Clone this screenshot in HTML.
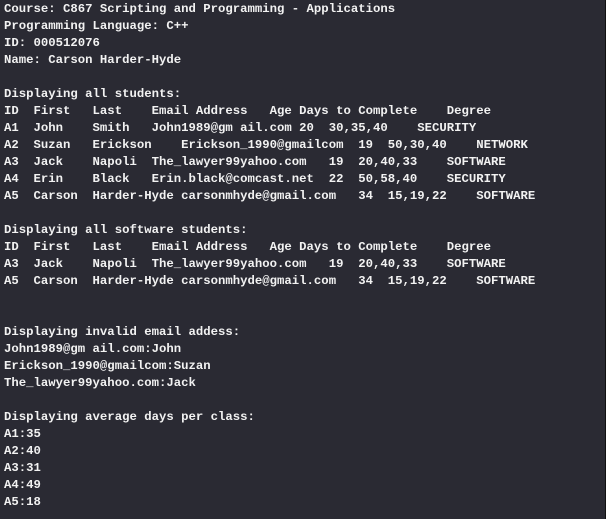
<!DOCTYPE html>
<html><head><meta charset="utf-8"><style>
html,body{margin:0;padding:0;}
body{width:606px;height:519px;background:#2a2a33;overflow:hidden;position:relative;}
body:after{content:"";position:absolute;right:0;top:0;width:1px;height:519px;background:#111;}
pre{margin:0;position:absolute;left:4px;top:1px;font-family:"Liberation Mono",monospace;font-weight:bold;font-size:12.3px;line-height:17px;color:#f2f2f2;}
</style></head><body><pre>Course: C867 Scripting and Programming - Applications
Programming Language: C++
ID: 000512076
Name: Carson Harder-Hyde

Displaying all students:
ID  First   Last    Email Address   Age Days to Complete    Degree
A1  John    Smith   John1989@gm ail.com 20  30,35,40    SECURITY
A2  Suzan   Erickson    Erickson_1990@gmailcom  19  50,30,40    NETWORK
A3  Jack    Napoli  The_lawyer99yahoo.com   19  20,40,33    SOFTWARE
A4  Erin    Black   Erin.black@comcast.net  22  50,58,40    SECURITY
A5  Carson  Harder-Hyde carsonmhyde@gmail.com   34  15,19,22    SOFTWARE

Displaying all software students:
ID  First   Last    Email Address   Age Days to Complete    Degree
A3  Jack    Napoli  The_lawyer99yahoo.com   19  20,40,33    SOFTWARE
A5  Carson  Harder-Hyde carsonmhyde@gmail.com   34  15,19,22    SOFTWARE


Displaying invalid email addess:
John1989@gm ail.com:John
Erickson_1990@gmailcom:Suzan
The_lawyer99yahoo.com:Jack

Displaying average days per class:
A1:35
A2:40
A3:31
A4:49
A5:18</pre></body></html>
